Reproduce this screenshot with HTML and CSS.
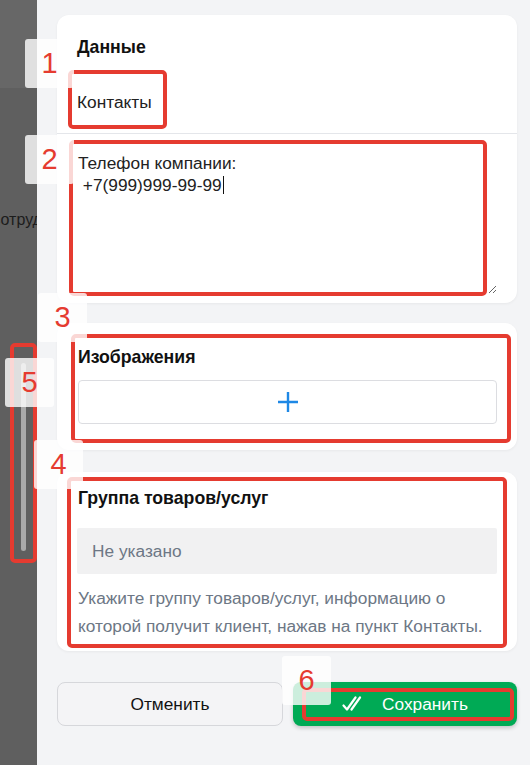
FILE: index.html
```html
<!DOCTYPE html>
<html lang="ru">
<head>
<meta charset="utf-8">
<title>Контакты</title>
<link rel="stylesheet" href="styles.css">
</head>
<body>
<div class="page">
  <aside class="side">
    <div class="side-top"></div>
    <div class="side-text">Сотрудники</div>
    <div class="side-scroll"></div>
  </aside>
  <main class="main">
    <section class="card card-data">
      <div class="data-head">
        <h3 class="title">Данные</h3>
        <div class="tab">Контакты</div>
      </div>
      <div class="data-body">
        <div class="editor">Телефон компании:
 +7(999)999-99-99<span class="caret"></span></div>
      </div>
    </section>

    <section class="card card-images">
      <h3 class="title">Изображения</h3>
      <button class="upload" type="button" aria-label="Добавить изображение">
        <svg width="20" height="20" viewBox="0 0 20 20"><path d="M10 0v20M0 10h20" stroke="#1e88e5" stroke-width="2.4" fill="none"/></svg>
      </button>
    </section>

    <section class="card card-group">
      <h3 class="title">Группа товаров/услуг</h3>
      <div class="select">Не указано</div>
      <p class="help">Укажите группу товаров/услуг, информацию о которой получит клиент, нажав на пункт Контакты.</p>
    </section>

    <div class="actions">
      <button class="btn btn-cancel" type="button">Отменить</button>
      <button class="btn btn-save" type="button">
        <svg width="24" height="18" viewBox="0 0 24 18"><path d="M1.5 10.5l3.5 4L13.5 2.5M9.5 14.5L18 2.5" stroke="#fff" stroke-width="2.2" fill="none" stroke-linecap="round" stroke-linejoin="round"/></svg>
        <span>Сохранить</span>
      </button>
    </div>
  </main>
</div>

<div class="marks">
  <div class="hl hl-1"></div>
  <div class="hl hl-2"></div>
  <div class="hl hl-3"></div>
  <div class="hl hl-4"></div>
  <div class="hl hl-5"></div>
  <div class="hl hl-6"></div>
  <div class="num num-1">1</div>
  <div class="num num-2">2</div>
  <div class="num num-3">3</div>
  <div class="num num-4">4</div>
  <div class="num num-5">5</div>
  <div class="num num-6">6</div>
</div>
</body>
</html>
```

FILE: styles.css
```css
* { box-sizing: border-box; }
html, body { margin: 0; padding: 0; }
body {
  font-family: "Liberation Sans", Arial, sans-serif;
  background: #f3f4f6;
  color: #1a1a1a;
  width: 530px;
  height: 765px;
  overflow: hidden;
  position: relative;
}
.page { display: flex; height: 765px; }

.side {
  width: 37px;
  flex: none;
  background: #5f5f5f;
  overflow: hidden;
  display: flex;
  flex-direction: column;
}
.side-top { height: 88px; background: #676767; }
.side-text {
  margin-top: 120px;
  margin-left: -11px;
  font-size: 16px;
  line-height: 24px;
  white-space: nowrap;
  color: #1c1c1c;
}
.side-scroll {
  margin-top: 131px;
  margin-left: 21px;
  width: 5px;
  height: 188px;
  border-radius: 3px;
  background: #a9a9a9;
}

.main {
  flex: 1;
  padding: 15px 13px 0 20px;
  display: flex;
  flex-direction: column;
}

.card {
  background: #fff;
  border-radius: 12px;
  box-shadow: 0 1px 3px rgba(0, 0, 0, 0.05);
}
.title {
  margin: 0;
  font-size: 17.7px;
  line-height: 20px;
  font-weight: 700;
  color: #111;
}

.card-data { height: 288px; display: flex; flex-direction: column; }
.data-head {
  height: 119px;
  padding: 22px 20px 0;
  border-bottom: 1px solid #e4e6ea;
}
.tab {
  margin-top: 35px;
  font-size: 17.3px;
  line-height: 20px;
  color: #222;
}
.data-body { padding: 6px 20px 0 20px; }
.editor {
  width: 420px;
  height: 154px;
  padding: 12px 1px 0;
  font-size: 17.3px;
  line-height: 22px;
  color: #222;
  white-space: pre-wrap;
  overflow: auto;
  resize: both;
}
.caret {
  display: inline-block;
  width: 1px;
  height: 18px;
  background: #111;
  vertical-align: -3px;
  margin-left: 1px;
}

.card-images {
  margin-top: 20px;
  height: 127px;
  padding: 24px 20px 0 21px;
}
.upload {
  display: flex;
  align-items: center;
  justify-content: center;
  margin-top: 13px;
  width: 419px;
  height: 44px;
  background: #fff;
  border: 1px solid #dcdde1;
  border-radius: 4px;
  padding: 0;
}

.card-group {
  margin-top: 22px;
  height: 179px;
  padding: 16px 20px 0 21px;
}
.select {
  margin-top: 20px;
  margin-left: -1px;
  width: 420px;
  height: 46px;
  background: #f1f1f2;
  border-radius: 2px;
  padding: 0 15px;
  font-size: 17.3px;
  line-height: 46px;
  color: #6d7785;
}
.help {
  margin: 10px 0 0;
  font-size: 17.3px;
  line-height: 28px;
  color: #6d7785;
}

.actions {
  margin-top: 31px;
  display: flex;
  gap: 10px;
}
.btn {
  flex: 1;
  height: 44px;
  border-radius: 8px;
  font-family: inherit;
  font-size: 17.3px;
  display: flex;
  align-items: center;
  justify-content: center;
  padding: 0;
}
.btn-cancel {
  background: #f4f4f6;
  border: 1px solid #d6d7db;
  color: #111;
}
.btn-save {
  background: #00aa55;
  border: none;
  color: #fff;
  gap: 16px;
  box-shadow: 0 2px 4px rgba(0, 0, 0, 0.2);
}

/* annotation overlay */
.marks { position: absolute; inset: 0; pointer-events: none; }
.hl {
  position: absolute;
  border: 4px solid #e53b30;
  border-radius: 5px;
}
.hl-1 { left: 68px; top: 70px; width: 99px; height: 59px; }
.hl-2 { left: 69px; top: 140px; width: 418px; height: 156px; }
.hl-3 { left: 71px; top: 334px; width: 440px; height: 109px; }
.hl-4 { left: 67px; top: 477px; width: 440px; height: 171px; }
.hl-5 { left: 10px; top: 343px; width: 27px; height: 220px; }
.hl-6 { left: 302px; top: 688px; width: 212px; height: 33px; }
.num {
  position: absolute;
  width: 49px;
  height: 49px;
  border-radius: 3px;
  background: rgba(255, 255, 255, 0.8);
  color: #e53b30;
  font-size: 29px;
  line-height: 49px;
  text-align: center;
}
.num-1 { left: 25px; top: 39px; }
.num-2 { left: 25px; top: 135px; }
.num-3 { left: 38px; top: 293px; }
.num-4 { left: 34px; top: 440px; }
.num-5 { left: 5px; top: 358px; }
.num-6 { left: 282px; top: 656px; }
```
